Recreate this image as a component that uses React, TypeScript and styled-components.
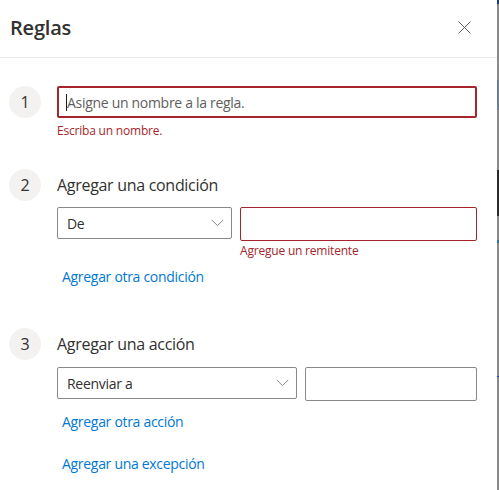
import React from "react";
import styled, { createGlobalStyle } from "styled-components";

const GlobalStyle = createGlobalStyle`
  html, body {
    margin: 0;
    padding: 0;
    background: #ffffff;
  }
  body {
    font-family: "Open Sans", "Noto Sans", sans-serif;
    color: #323130;
  }
  * { box-sizing: border-box; }
`;

const Screen = styled.div`
  display: flex;
  width: 499px;
  height: 490px;
  overflow: hidden;
`;

const Panel = styled.div`
  width: 497px;
  height: 490px;
  background: #ffffff;
  display: flex;
  flex-direction: column;
`;

const Backdrop = styled.div`
  width: 2px;
  height: 490px;
  background: linear-gradient(
    to bottom,
    #1f3a6e 0px, #1f3a6e 4px,
    #8a8a8a 4px, #8a8a8a 80px,
    #6e7c8c 80px, #6e7c8c 110px,
    #8a8a8a 110px, #8a8a8a 170px,
    #2a2a2a 170px, #2a2a2a 216px,
    #8a8a8a 216px, #8a8a8a 240px,
    #3d6f8f 240px, #3d6f8f 243px,
    #8a8a8a 243px, #8a8a8a 376px,
    #2b3fb0 376px, #2b3fb0 377px,
    #8a8a8a 377px
  );
`;

const Header = styled.div`
  height: 58px;
  display: flex;
  align-items: center;
  justify-content: space-between;
  padding: 0 26px 0 10px;
  border-bottom: 1px solid #edebe9;
`;

const Title = styled.h1`
  margin: 0;
  font-size: 20px;
  font-weight: 600;
  color: #323130;
  line-height: 28px;
  padding-bottom: 2px;
  letter-spacing: -0.2px;
`;

const CloseButton = styled.button`
  width: 14px;
  height: 14px;
  padding: 0;
  border: none;
  background: transparent;
  display: flex;
  align-items: center;
  justify-content: center;
  margin-bottom: 3px;
  cursor: pointer;
`;

const Body = styled.div`
  display: flex;
  flex-direction: column;
  padding: 28px 20px 0 9px;
`;

const Step = styled.section<{ $gap: number }>`
  display: grid;
  grid-template-columns: 32px 1fr;
  column-gap: 16px;
  margin-bottom: ${(p) => p.$gap}px;
`;

const StepNumber = styled.div`
  width: 32px;
  height: 32px;
  border-radius: 50%;
  background: #f3f2f1;
  display: flex;
  align-items: center;
  justify-content: center;
  font-size: 16px;
  color: #323130;
`;

const StepContent = styled.div`
  display: flex;
  flex-direction: column;
`;

const StepHeading = styled.h2<{ $below: number }>`
  margin: 0 0 ${(p) => p.$below}px;
  font-size: 16px;
  font-weight: 400;
  line-height: 32px;
  color: #323130;
  letter-spacing: -0.3px;
`;

const NameInput = styled.div`
  height: 32px;
  border: 2px solid #a4262c;
  border-radius: 2px;
  display: flex;
  align-items: center;
  padding-left: 7px;
  font-size: 14px;
  color: #605e5c;
  letter-spacing: -0.3px;
`;

const Caret = styled.span`
  display: inline-block;
  width: 1px;
  height: 17px;
  background: #201f1e;
`;

const ErrorText = styled.div<{ $top: number }>`
  font-size: 12px;
  line-height: 16px;
  color: #a4262c;
  margin-top: ${(p) => p.$top}px;
  letter-spacing: -0.2px;
`;

const FieldRow = styled.div`
  display: flex;
  align-items: flex-start;
  gap: 8px;
`;

const Dropdown = styled.div<{ $width: number }>`
  width: ${(p) => p.$width}px;
  flex: none;
  height: 32px;
  border: 1px solid #8a8886;
  border-radius: 2px;
  display: flex;
  align-items: center;
  justify-content: space-between;
  padding: 0 7px 0 9px;
  font-size: 14px;
  color: #323130;
  letter-spacing: -0.3px;
`;

const FieldColumn = styled.div`
  flex: 1;
  display: flex;
  flex-direction: column;
`;

const TextBox = styled.div<{ $invalid?: boolean }>`
  height: 34px;
  border: 1px solid ${(p) => (p.$invalid ? "#a4262c" : "#8a8886")};
  border-radius: 2px;
`;

const LinkButton = styled.button<{ $top: number }>`
  align-self: flex-start;
  margin-top: ${(p) => p.$top}px;
  padding: 0 5px;
  border: none;
  background: transparent;
  font-family: inherit;
  font-size: 14px;
  line-height: 20px;
  color: #0078d4;
  letter-spacing: -0.3px;
  cursor: pointer;
`;

const Chevron = () => (
  <svg width="13" height="8" viewBox="0 0 13 8" fill="none">
    <path d="M0.8 1 L6.5 6.6 L12.2 1" stroke="#8a8886" strokeWidth="1" />
  </svg>
);

const CloseIcon = () => (
  <svg width="13" height="13" viewBox="0 0 13 13" fill="none">
    <path d="M0.5 0.5 L12.5 12.5 M12.5 0.5 L0.5 12.5" stroke="#605e5c" strokeWidth="1" />
  </svg>
);

export default function App() {
  return (
    <>
      <GlobalStyle />
      <Screen>
        <Panel>
          <Header>
            <Title>Reglas</Title>
            <CloseButton aria-label="Cerrar">
              <CloseIcon />
            </CloseButton>
          </Header>
          <Body>
            <Step $gap={30}>
              <StepNumber>1</StepNumber>
              <StepContent>
                <NameInput>
                  <Caret />
                  Asigne un nombre a la regla.
                </NameInput>
                <ErrorText $top={5}>Escriba un nombre.</ErrorText>
              </StepContent>
            </Step>

            <Step $gap={41}>
              <StepNumber>2</StepNumber>
              <StepContent>
                <StepHeading $below={6}>Agregar una condición</StepHeading>
                <FieldRow>
                  <Dropdown $width={175}>
                    De
                    <Chevron />
                  </Dropdown>
                  <FieldColumn>
                    <TextBox $invalid />
                    <ErrorText $top={2}>Agregue un remitente</ErrorText>
                  </FieldColumn>
                </FieldRow>
                <LinkButton $top={8}>Agregar otra condición</LinkButton>
              </StepContent>
            </Step>

            <Step $gap={0}>
              <StepNumber>3</StepNumber>
              <StepContent>
                <StepHeading $below={7}>Agregar una acción</StepHeading>
                <FieldRow>
                  <Dropdown $width={240}>
                    Reenviar a
                    <Chevron />
                  </Dropdown>
                  <FieldColumn>
                    <TextBox />
                  </FieldColumn>
                </FieldRow>
                <LinkButton $top={11}>Agregar otra acción</LinkButton>
                <LinkButton $top={22}>Agregar una excepción</LinkButton>
              </StepContent>
            </Step>
          </Body>
        </Panel>
        <Backdrop />
      </Screen>
    </>
  );
}
